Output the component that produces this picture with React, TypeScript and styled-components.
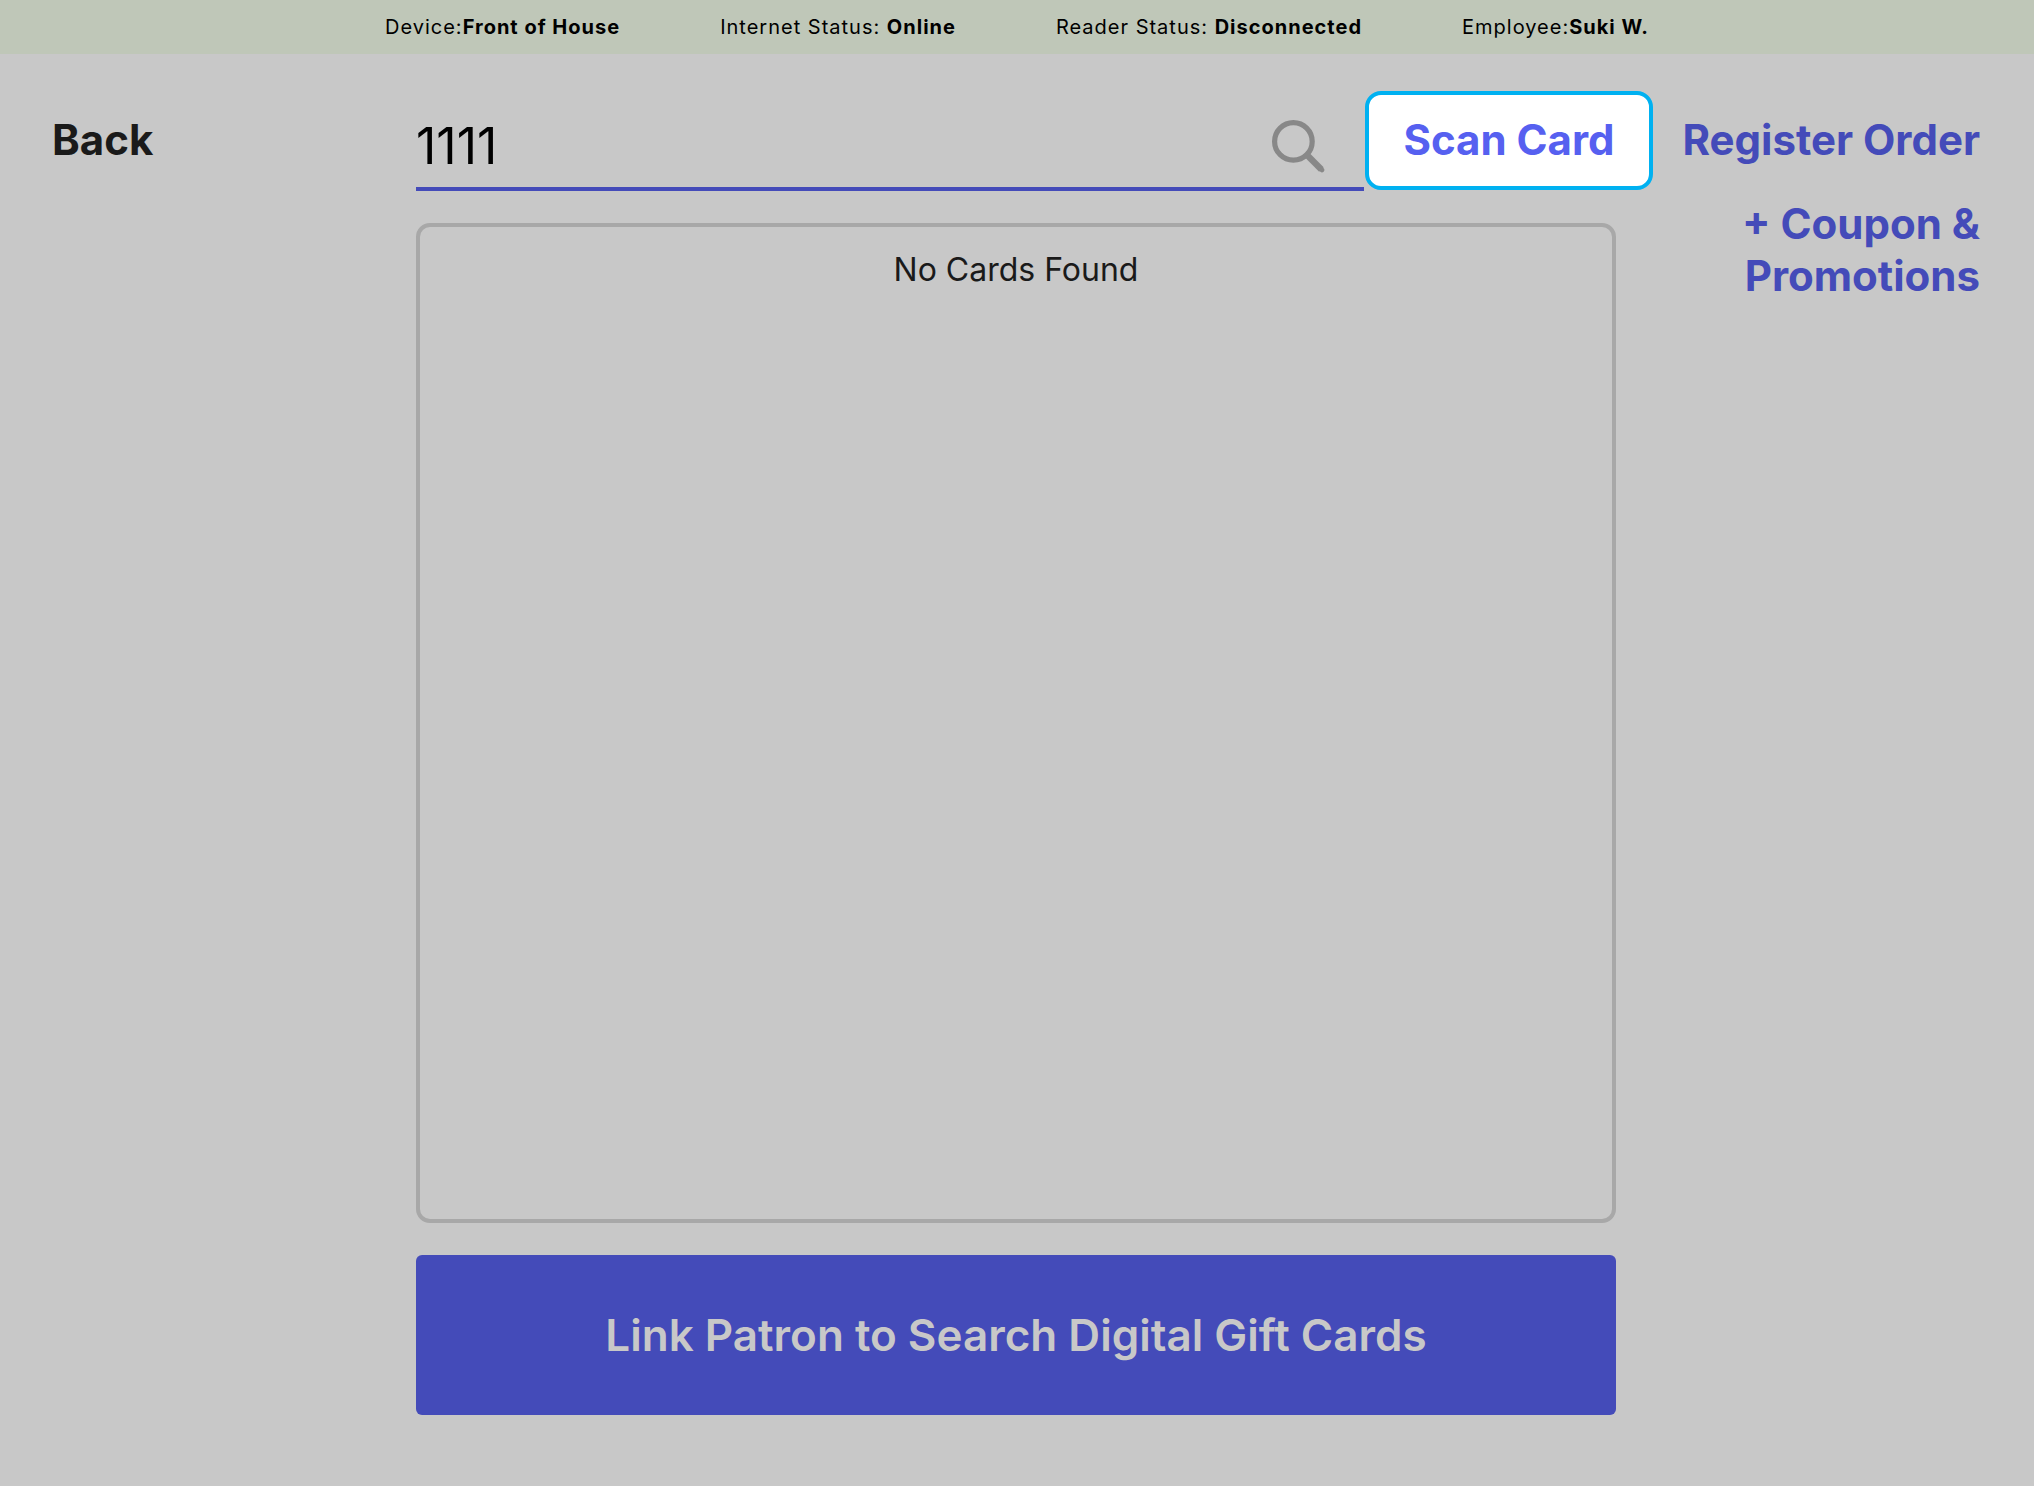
import React, { useState } from "react";
import styled, { createGlobalStyle } from "styled-components";

const GlobalStyle = createGlobalStyle`
  *, *::before, *::after { box-sizing: border-box; }
  body {
    margin: 0;
    background: #c8c8c8;
    color: #1a1a1a;
    font-family: Inter, Roboto, "Liberation Sans", sans-serif;
  }
  button, input { font: inherit; color: inherit; }
`;

const Page = styled.div`
  min-height: 100vh;
  display: flex;
  flex-direction: column;
`;

const StatusBar = styled.header`
  display: flex;
  justify-content: center;
  align-items: center;
  flex-wrap: wrap;
  gap: 0 100px;
  min-height: 54px;
  background: #bfc7b8;
  color: #000;
  font-size: 20px;
  line-height: 24px;
  letter-spacing: 1px;
`;

const StatusItem = styled.span`
  white-space: pre;
`;

const StatusValue = styled.strong`
  font-weight: 700;
`;

const Layout = styled.main`
  flex: 1;
  display: grid;
  grid-template-columns: minmax(max-content, 1fr) minmax(0, 1200px) minmax(max-content, 1fr);
  padding: 37px 54px 71px 52px;
`;

const TextButton = styled.button<{ $accent?: boolean }>`
  padding: 0;
  border: 0;
  background: none;
  color: ${(p) => (p.$accent ? "#444bb9" : "#1a1a1a")};
  font-size: 42px;
  line-height: 52px;
  font-weight: 700;
  text-align: inherit;
  cursor: pointer;
`;

const Side = styled.nav<{ $align: "left" | "right" }>`
  display: flex;
  flex-direction: column;
  align-items: ${(p) => (p.$align === "left" ? "flex-start" : "flex-end")};
  gap: 32px;
  padding-top: 23px;
  text-align: ${(p) => p.$align};
`;

const Center = styled.section`
  display: flex;
  flex-direction: column;
  gap: 32px;
`;

const SearchRow = styled.form`
  display: flex;
  align-items: flex-start;
  margin-right: -37px;
  gap: 1px;
`;

const SearchField = styled.div`
  flex: 1;
  min-width: 0;
  height: 100px;
  display: flex;
  align-items: center;
  padding: 14px 39px 0 0;
  border-bottom: 4px solid #444bb9;
`;

const SearchInput = styled.input`
  flex: 1;
  min-width: 0;
  padding: 0;
  border: 0;
  outline: 0;
  background: none;
  color: #000;
  font-size: 50px;
  line-height: 60px;
`;

const IconButton = styled.button`
  display: flex;
  padding: 0;
  border: 0;
  background: none;
  color: #888;
`;

const ScanButton = styled(TextButton)`
  width: 288px;
  height: 99px;
  padding-bottom: 2px;
  border: 4px solid #00b1f1;
  border-radius: 16px;
  background: #fff;
  color: #5660f0;
  text-align: center;
  white-space: nowrap;
`;

const Results = styled.div`
  flex: 1;
  padding: 24px;
  border: 4px solid #a8a8a8;
  border-radius: 14px;
  font-size: 32px;
  line-height: 38px;
  text-align: center;
`;

const Message = styled.p`
  margin: 0;
`;

const LinkButton = styled.button`
  height: 160px;
  border: 0;
  border-radius: 6px;
  background: #444bb9;
  color: #c8c8c8;
  font-size: 44px;
  line-height: 52px;
  font-weight: 600;
  cursor: pointer;
`;

const statuses = [
  { label: "Device:", value: "Front of House" },
  { label: "Internet Status: ", value: "Online" },
  { label: "Reader Status: ", value: "Disconnected" },
  { label: "Employee:", value: "Suki W." },
];

function SearchIcon() {
  return (
    <svg width="53" height="53" viewBox="0 0 53 53" fill="none" stroke="currentColor" aria-hidden="true">
      <circle cx="21.4" cy="21.4" r="18.8" strokeWidth="5.2" />
      <path d="M35 35 49.4 49.4" strokeWidth="6.4" />
      <path d="M48.6 48.6 50 50" strokeWidth="4.6" strokeLinecap="round" />
    </svg>
  );
}

export default function App() {
  const [query, setQuery] = useState("1111");
  return (
    <Page>
      <GlobalStyle />
      <StatusBar>
        {statuses.map((s) => (
          <StatusItem key={s.label}>
            {s.label}
            <StatusValue>{s.value}</StatusValue>
          </StatusItem>
        ))}
      </StatusBar>
      <Layout>
        <Side $align="left">
          <TextButton type="button">Back</TextButton>
        </Side>
        <Center>
          <SearchRow onSubmit={(e) => e.preventDefault()}>
            <SearchField>
              <SearchInput
                aria-label="Card number"
                value={query}
                onChange={(e) => setQuery(e.target.value)}
              />
              <IconButton type="submit" aria-label="Search">
                <SearchIcon />
              </IconButton>
            </SearchField>
            <ScanButton type="button">Scan Card</ScanButton>
          </SearchRow>
          <Results>
            <Message>No Cards Found</Message>
          </Results>
          <LinkButton type="button">Link Patron to Search Digital Gift Cards</LinkButton>
        </Center>
        <Side $align="right">
          <TextButton type="button" $accent>Register Order</TextButton>
          <TextButton type="button" $accent>
            + Coupon &amp;
            <br />
            Promotions
          </TextButton>
        </Side>
      </Layout>
    </Page>
  );
}
